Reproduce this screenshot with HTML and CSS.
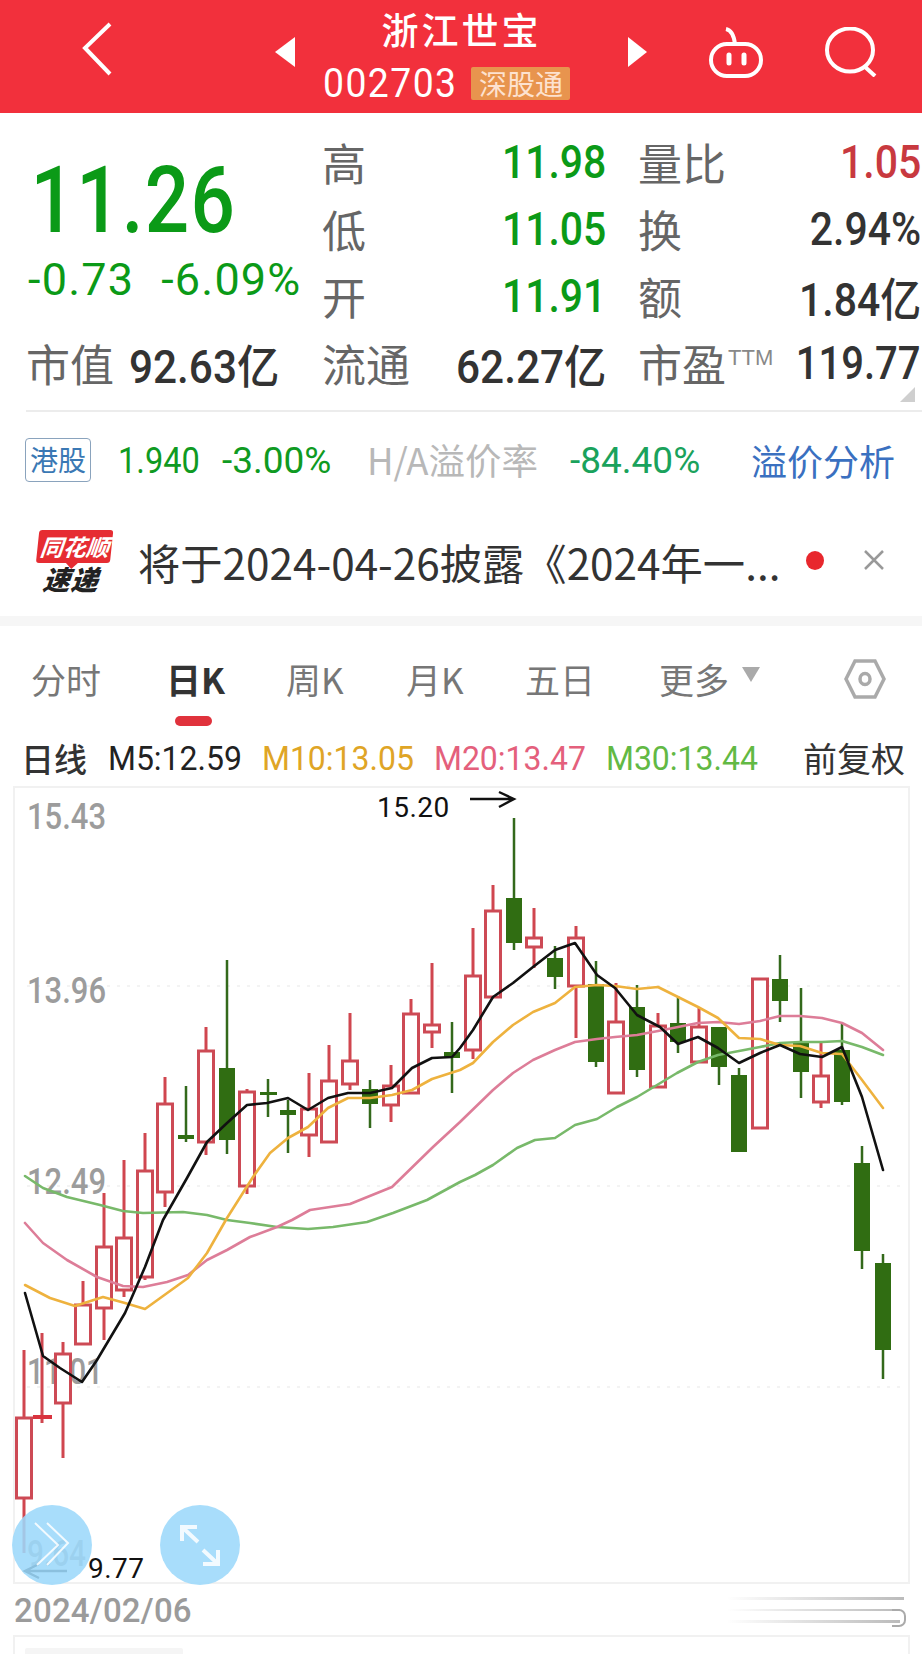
FILE: index.html
```html
<!DOCTYPE html>
<html lang="zh">
<head>
<meta charset="utf-8">
<title>浙江世宝 002703</title>
<link rel="stylesheet" href="styles.css">
</head>
<body>
<header class="top">
  <svg class="ic-back" viewBox="0 0 30 54"><path d="M28 2 3 26l25 26"/></svg>
  <span class="tri tri-l"></span>
  <div class="top-mid">
    <div class="title">浙江世宝</div>
    <div class="code-row"><span class="code">002703</span><span class="badge-sz">深股通</span></div>
  </div>
  <span class="tri tri-r"></span>
  <svg class="ic-robot" viewBox="709 27 54 52"><path d="M726 29c5 1 8 7 9 15"/><rect x="711" y="44" width="50" height="32" rx="16"/><path class="eye" d="M729 55v8M744 55v8"/></svg>
  <svg class="ic-search" viewBox="825 27 52 50"><ellipse cx="850" cy="50" rx="23" ry="21.500"/><path d="m864 66 11 10"/></svg>
</header>

<section class="stats">
  <div class="price-box">
    <div class="price">11.26</div>
    <div class="change"><span>-0.73</span><span>-6.09%</span></div>
  </div>
  <div class="cell"><span class="lab">高</span><span class="val up">11.98</span></div>
  <div class="cell"><span class="lab">量比</span><span class="val red">1.05</span></div>
  <div class="cell"><span class="lab">低</span><span class="val up">11.05</span></div>
  <div class="cell"><span class="lab">换</span><span class="val">2.94%</span></div>
  <div class="cell"><span class="lab">开</span><span class="val up">11.91</span></div>
  <div class="cell"><span class="lab">额</span><span class="val">1.84亿</span></div>
  <div class="cell cap"><span class="lab">市值</span><span class="val wide">92.63亿</span></div>
  <div class="cell"><span class="lab">流通</span><span class="val wide">62.27亿</span></div>
  <div class="cell"><span class="lab">市盈<sup class="ttm">TTM</sup></span><span class="val tight">119.77</span></div>
  <span class="corner"></span>
</section>

<section class="hk">
  <span class="hk-tag">港股</span>
  <span class="hk-price">1.940</span>
  <span class="hk-pct">-3.00%</span>
  <span class="hk-lab">H/A溢价率</span>
  <span class="hk-prem">-84.40%</span>
  <span class="hk-link">溢价分析</span>
</section>

<section class="news">
  <div class="logo"><div class="logo-top"><span>同花顺</span></div><div class="logo-bot">速递</div></div>
  <div class="news-text">将于2024-04-26披露《2024年一...</div>
  <span class="dot"></span>
  <svg class="ic-x" viewBox="0 0 22 20"><path d="m2 1 18 18M20 1 2 19"/></svg>
</section>

<nav class="tabs">
  <span class="tab">分时</span>
  <span class="tab on">日K</span>
  <span class="tab">周K</span>
  <span class="tab">月K</span>
  <span class="tab">五日</span>
  <span class="tab">更多</span>
  <span class="more-tri"></span>
  <svg class="ic-hex" viewBox="0 0 42 40"><path d="M11 2h20l9 18-9 18H11L2 20z"/><ellipse cx="21" cy="20" rx="5" ry="5.500"/></svg>
  <span class="tab-line"></span>
</nav>

<div class="legend">
  <span class="lg-name">日线</span>
  <span class="ma-val m5">M5:12.59</span>
  <span class="ma-val m10">M10:13.05</span>
  <span class="ma-val m20">M20:13.47</span>
  <span class="ma-val m30">M30:13.44</span>
  <span class="lg-adj">前复权</span>
</div>

<div class="chart">
  <svg class="plot" viewBox="13 786 897 798">
    <path class="grid" d="M27 986H900M27 1186H900M27 1387H900"/>
    <g class="axis">
      <text x="27" y="829" textLength="79" lengthAdjust="spacingAndGlyphs">15.43</text>
      <text x="27" y="1003" textLength="79" lengthAdjust="spacingAndGlyphs">13.96</text>
      <text x="27" y="1194" textLength="79" lengthAdjust="spacingAndGlyphs">12.49</text>
      <text x="27" y="1384" textLength="76" lengthAdjust="spacingAndGlyphs">11.01</text>
      <text x="27" y="1566" textLength="59" lengthAdjust="spacingAndGlyphs">9.64</text>
    </g>
    <path class="wick-r" d="M24 1350V1418M24 1498V1553M42 1333V1423M63 1342V1354M63 1403V1458M83 1281V1305M104 1193V1247M104 1308V1340M124 1160V1238M124 1290V1297M145 1133V1171M145 1277V1280M165 1077V1104M165 1192V1207M206 1027V1051M206 1142V1155M247 1089V1092M247 1186V1194M309 1073V1109M309 1135V1157M329 1045V1081M350 1013V1061M350 1084V1090M391 1065V1086M391 1105V1122M411 999V1014M432 963V1025M432 1032V1048M473 928V976M473 1050V1059M493 885V911M534 908V938M534 947V968M576 926V938M576 986V1038M616 983V1022M658 1013V1026M699 1007V1027M821 1042V1076M821 1102V1108"/>
    <path class="flat-r" d="M33 1417H52"/>
    <path class="body-r" d="M16.500 1418h15v80h-15zM55.500 1354h15v49h-15zM75.500 1305h15v39h-15zM96.500 1247h15v61h-15zM116.500 1238h15v52h-15zM137.500 1171h15v106h-15zM157.500 1104h15v88h-15zM198.500 1051h15v91h-15zM239.500 1092h15v94h-15zM301.500 1109h15v26h-15zM321.500 1081h15v61h-15zM342.500 1061h15v23h-15zM383.500 1086h15v19h-15zM403.500 1014h15v79h-15zM424.500 1025h15v7h-15zM465.500 976h15v74h-15zM485.500 911h15v86h-15zM526.500 938h15v9h-15zM568.500 938h15v48h-15zM608.500 1022h15v71h-15zM650.500 1026h15v61h-15zM691.500 1027h15v35h-15zM752.500 979h15v149h-15zM813.500 1076h15v26h-15z"/>
    <path class="wick-g" d="M186 1086V1142M227 960V1154M268 1079V1117M288 1100V1153M370 1080V1128M452 1022V1093M514 818V950M555 946V989M596 961V1067M637 985V1077M678 996V1053M719 1027V1085M739 1068V1075M780 955V1022M801 988V1098M842 1024V1105M862 1146V1269M883 1254V1379"/>
    <path class="body-g" d="M178 1135h16v4h-16zM219 1068h16v72h-16zM260 1092h17v3h-17zM280 1110h16v5h-16zM362 1089h16v15h-16zM444 1052h16v6h-16zM506 898h16v45h-16zM547 958h16v19h-16zM588 984h16v78h-16zM629 1007h16v63h-16zM670 1023h16v19h-16zM711 1027h16v40h-16zM731 1075h16v77h-16zM772 979h16v22h-16zM793 1042h16v30h-16zM834 1050h16v52h-16zM854 1163h16v88h-16zM875 1263h16v87h-16z"/>
    <path class="ma ma30" d="M25 1176 43 1188 67 1197 100 1205 123 1211 143 1213 183 1212 207 1215 227 1220 250 1223 277 1227 308 1229 333 1227 367 1222 393 1213 427 1200 460 1182 475 1175 493 1165 517 1148 535 1140 555 1138 575 1125 597 1119 617 1107 637 1097 657 1085 677 1073 698 1062 718 1055 739 1051 760 1047 780 1043 800 1042 822 1042 842 1041 862 1047 883 1055"/>
    <path class="ma ma20" d="M25 1223 43 1243 67 1260 97 1277 123 1286 143 1287 167 1282 188 1275 207 1260 227 1250 250 1237 277 1227 292 1220 310 1210 350 1204 392 1187 433 1147 460 1122 493 1090 513 1073 533 1060 555 1050 575 1042 597 1039 615 1037 637 1035 658 1031 678 1027 698 1023 718 1022 739 1024 760 1021 780 1016 800 1016 822 1018 842 1023 862 1033 883 1050"/>
    <path class="ma ma10" d="M25 1285 50 1298 75 1306 103 1297 125 1303 145 1309 188 1278 207 1253 227 1218 253 1177 270 1153 288 1138 308 1127 328 1108 348 1098 370 1098 392 1095 412 1090 432 1079 460 1070 473 1063 493 1042 513 1025 533 1012 555 1003 575 987 597 985 615 986 637 989 658 987 678 997 698 1007 718 1018 739 1038 760 1039 780 1045 800 1046 822 1053 842 1054 862 1080 883 1108"/>
    <path class="ma ma5" d="M25 1293 35 1328 43 1356 60 1368 82 1382 97 1360 125 1313 145 1267 163 1220 187 1178 207 1142 227 1123 247 1105 267 1103 288 1098 308 1110 328 1098 348 1093 370 1093 392 1088 412 1068 432 1058 452 1057 460 1048 473 1030 493 997 513 983 533 967 555 950 575 943 597 975 615 988 637 1015 660 1027 678 1044 698 1037 718 1048 739 1063 760 1053 780 1045 800 1054 822 1057 842 1047 862 1097 883 1170"/>
    <text class="mark" x="377" y="817">15.20</text>
    <path class="arrow" d="M470 799H513M499 792l15 7-15 8"/>
    <text class="mark" x="88" y="1578">9.77</text>
    <path class="arrow" d="M67 1571H25M39 1564l-14 7 14 7"/>
    <circle class="fab" cx="52" cy="1545" r="40"/>
    <circle class="fab" cx="200" cy="1545" r="40"/>
    <path class="fab-ic thin" d="M35 1523 58 1545 37 1565M47 1523 68 1543 47 1565"/>
    <path class="fab-ic" d="M182 1541V1527H197M182 1527 198 1542M218 1550V1564H203M218 1564 203 1550"/>
  </svg>
</div>

<div class="date-row">
  <span class="date">2024/02/06</span>
  <span class="scroll"><span class="s1"></span><span class="s2"></span></span>
</div>

<div class="sub">
  <span class="sub-bar"></span>
</div>
</body>
</html>
```
FILE: styles.css
```css
* { box-sizing: border-box; }
html, body { margin: 0; padding: 0; }
body {
  width: 922px;
  height: 1654px;
  overflow: hidden;
  background: #fff;
  color: #333;
  font-family: Roboto, "Noto Sans CJK SC", sans-serif;
}

/* header */
.top {
  height: 113px;
  background: #f2303c;
  color: #fff;
  display: flex;
  align-items: center;
  padding-left: 82px;
}
.ic-back { width: 30px; height: 54px; fill: none; stroke: #fff; stroke-width: 4; margin-top: -15px; }
.tri { width: 0; height: 0; border-top: 15px solid transparent; border-bottom: 15px solid transparent; margin-top: -9px; }
.tri-l { margin-left: 163px; border-right: 20px solid #fff; }
.tri-r { border-left: 19px solid #fff; }
.top-mid { width: 333px; height: 113px; display: flex; flex-direction: column; align-items: center; padding-top: 9px; }
.title { font: 500 37px/40px "Noto Sans CJK SC", sans-serif; letter-spacing: 3px; }
.code-row { display: flex; align-items: center; padding-right: 30px; margin-top: 16px; height: 36px; }
.code { display: inline-block; font-size: 41px; line-height: 36px; letter-spacing: 1.600px; transform: scaleX(.91); transform-origin: left; }
.badge-sz {
  margin-left: 1px;
  width: 99px;
  height: 33px;
  background: #e8944e;
  border-radius: 2px;
  color: #fde2d0;
  font: 400 28px/33px "Noto Sans CJK SC", sans-serif;
  text-align: center;
  white-space: nowrap;
}
.ic-robot { width: 54px; height: 52px; margin-left: 62px; margin-top: -7px; fill: none; stroke: #fff; stroke-width: 4; }
.ic-robot .eye { stroke-width: 5; stroke-linecap: round; }
.ic-search { width: 52px; height: 50px; margin-left: 62px; margin-top: -9px; fill: none; stroke: #fff; stroke-width: 4; }

/* quote block */
.stats {
  position: relative;
  padding: 15px 0 0 0;
  display: grid;
  grid-template-columns: 322px 282px 318px;
  grid-auto-rows: 67px;
  height: 299px;
}
.stats::after {
  content: "";
  position: absolute;
  left: 26px;
  right: 0;
  bottom: 0;
  height: 2px;
  background: #ececec;
}
.price-box { grid-row: 1 / span 3; grid-column: 1; padding-left: 28px; }
.price { font-size: 93px; line-height: 70px; font-weight: 500; color: #0b9a17; margin-top: 38px; padding-left: 3px; letter-spacing: 1.500px; transform: scaleX(.84); transform-origin: left; }
.change { display: flex; gap: 27px; color: #0b9a17; font-size: 45px; line-height: 44px; margin-top: 22px; letter-spacing: 1.200px; }
.cell { display: flex; justify-content: space-between; align-items: center; white-space: nowrap; }
.stats .cell:nth-child(2), .stats .cell:nth-child(4), .stats .cell:nth-child(6), .stats .cell:nth-child(9) { grid-column: 2; margin-right: -2px; }
.stats .cell:nth-child(3), .stats .cell:nth-child(5), .stats .cell:nth-child(7), .stats .cell:nth-child(10) { grid-column: 3; margin-left: 34px; margin-right: 1px; }
.stats .cap { grid-column: 1; justify-content: flex-start; padding-left: 26px; gap: 15px; }
.lab { font: 400 44px/48px "Noto Sans CJK SC", sans-serif; color: #666; position: relative; }
.val { display: inline-block; font-size: 46px; font-weight: 500; color: #333; transform: scaleX(.89); transform-origin: right; }
.val.wide { transform: scaleX(.92); }
.val.tight { transform: scaleX(.87); }
.cap .val { transform-origin: left; }
.val.up { color: #0b9a17; }
.val.red { color: #c8393f; }
.ttm { font: 400 22px/1 "Liberation Sans", sans-serif; color: #888; vertical-align: 17px; margin-left: 2px; }
.corner {
  position: absolute;
  left: 900px;
  top: 274px;
  width: 0;
  height: 0;
  border-left: 15px solid transparent;
  border-bottom: 15px solid #cfcfcf;
}

/* H share row */
.hk {
  display: grid;
  grid-template-columns: 93px 104px 145px 203px 183px auto;
  align-items: center;
  padding: 4px 0 0 25px;
  height: 92px;
  white-space: nowrap;
}
.hk-tag {
  width: 66px;
  height: 44px;
  border: 1.500px solid #8aa3bd;
  border-radius: 4px;
  color: #3a78b4;
  font: 400 28px/41px "Noto Sans CJK SC", sans-serif;
  text-align: center;
}
.hk-price, .hk-pct { color: #0f9a22; font-size: 37px; }
.hk-price { display: inline-block; transform: scaleX(.88); transform-origin: left; }
.hk-lab { color: #b8b8b8; font: 400 36.500px/44px "Noto Sans CJK SC", sans-serif; }
.hk-prem { color: #1aa25c; font-size: 37px; }
.hk-link { color: #3a70c0; font: 400 36px/44px "Noto Sans CJK SC", sans-serif; margin-left: -2px; }

/* news row */
.news {
  display: flex;
  align-items: center;
  height: 112px;
  padding-left: 36px;
}
.logo { width: 74px; height: 64px; transform: skewX(-6deg); flex: none; margin-top: 3px; }
.logo-top {
  height: 33px;
  background: #e62c32;
  border-radius: 3px;
  color: #fff;
  font: italic 700 23px/33px "Noto Sans CJK SC", sans-serif;
  text-align: center;
  position: relative;
  white-space: nowrap;
}
.logo-top::after {
  content: "";
  position: absolute;
  left: 30px;
  bottom: -6px;
  border-left: 6px solid transparent;
  border-right: 6px solid transparent;
  border-top: 6px solid #e62c32;
}
.logo-bot { font: italic 900 27px/31px "Noto Sans CJK SC", sans-serif; color: #222; text-align: center; letter-spacing: 1px; }
.news-text { margin-left: 28px; width: 652px; padding-top: 4px; font: 400 42.300px/48px "Noto Sans CJK SC", Roboto, sans-serif; color: #333; white-space: nowrap; }
.dot { margin-left: 16px; width: 18px; height: 19px; border-radius: 50%; background: #e8272d; flex: none; }
.ic-x { width: 22px; height: 20px; margin-left: 39px; fill: none; stroke: #999; stroke-width: 2.500; flex: none; }

/* tabs */
.tabs {
  position: relative;
  border-top: 10px solid #f6f6f6;
  height: 118px;
  padding: 28px 0 0 31px;
  display: grid;
  grid-template-columns: 138px 117px 120px 119px 134px 83px 102px auto;
  align-items: center;
  align-content: start;
  grid-template-rows: 50px;
}
.tab { font: 400 35px/50px "Noto Sans CJK SC", Roboto, sans-serif; color: #777; white-space: nowrap; }
.tab.on { color: #333; font-weight: 700; margin-left: -3px; }
.more-tri { width: 0; height: 0; margin-top: -10px; border-left: 9px solid transparent; border-right: 9px solid transparent; border-top: 15px solid #aaa; }
.ic-hex { width: 42px; height: 40px; fill: none; stroke: #aaa; stroke-width: 3.500; }
.tab-line {
  position: absolute;
  left: 175px;
  top: 90px;
  width: 37px;
  height: 10px;
  border-radius: 5px;
  background: #e0323c;
}

/* legend */
.legend {
  display: grid;
  grid-template-columns: 87px 154px 172px 172px 197px auto;
  align-items: center;
  height: 52px;
  padding: 0 0 5px 21px;
  white-space: nowrap;
  font-size: 34px;
}
.ma-val { display: inline-block; transform: scaleX(.94); transform-origin: left; }
.lg-name, .lg-adj { font: 400 33px/40px "Noto Sans CJK SC", sans-serif; color: #333; }
.lg-name { font-weight: 500; }
.lg-adj { font-size: 34px; }
.m5 { color: #222; }
.m10 { color: #dfa526; }
.m20 { color: #e4607c; }
.m30 { color: #62b944; }

/* chart */
.chart {
  position: relative;
  margin-left: 13px;
  width: 897px;
  height: 798px;
  border: 2px solid #f1f1f1;
}
.plot { position: absolute; left: -2px; top: -2px; width: 897px; height: 798px; overflow: visible; }
.grid { fill: none; stroke: #efefef; stroke-width: 1.500; stroke-dasharray: 3 7; }
.axis text { font: 500 36px "Roboto", sans-serif; fill: #9c9c9c; }
.wick-r { fill: none; stroke: #d0464f; stroke-width: 3; }
.flat-r { fill: none; stroke: #d9343f; stroke-width: 4; }
.body-r { fill: #fff; stroke: #cd4a55; stroke-width: 3; }
.wick-g { fill: none; stroke: #33691b; stroke-width: 2.500; }
.body-g { fill: #306d12; }
.ma { fill: none; stroke-width: 2.600; stroke-linejoin: round; stroke-linecap: round; }
.ma5 { stroke: #111; }
.ma10 { stroke: #eeb23e; }
.ma20 { stroke: #dd7d98; }
.ma30 { stroke: #78b96a; }
.mark { font: 400 28px "Roboto", sans-serif; fill: #111; letter-spacing: 0.500px; }
.arrow { fill: none; stroke: #111; stroke-width: 2.400; }
.fab { fill: #9cd8fb; fill-opacity: 0.88; }
.fab-ic { fill: none; stroke: #fff; stroke-width: 4; opacity: 0.85; }
.fab-ic.thin { stroke-width: 2; }

/* date */
.date-row { position: relative; height: 51px; padding: 2px 0 0 14px; }
.date { font: 500 33px/50px "Roboto", sans-serif; color: #9b9b9b; letter-spacing: 0.200px; }
.scroll { position: absolute; left: 727px; top: 0; width: 179px; height: 51px; }
.s1 { position: absolute; left: 0; right: 2px; top: 13px; height: 3px; background: linear-gradient(90deg, #fff, #bbb); }
.s2 {
  position: absolute;
  left: 0;
  right: 6px;
  top: 25px;
  height: 14px;
  background:
    linear-gradient(90deg, #fff, #bbb) top / 100% 2px no-repeat,
    linear-gradient(90deg, #fff, #bbb) bottom / 100% 3px no-repeat;
}
.s2::after {
  content: "";
  position: absolute;
  right: -6px;
  top: 0;
  width: 12px;
  height: 14px;
  border: 2px solid #aaa;
  border-left: 0;
  border-radius: 0 7px 7px 0;
}

/* sub chart */
.sub {
  margin-left: 13px;
  width: 897px;
  height: 20px;
  border: 2px solid #f1f1f1;
  border-bottom: 0;
  padding: 11px 0 0 10px;
}
.sub-bar { display: block; width: 158px; height: 7px; background: #f5f5f5; border-radius: 2px 2px 0 0; }
```
